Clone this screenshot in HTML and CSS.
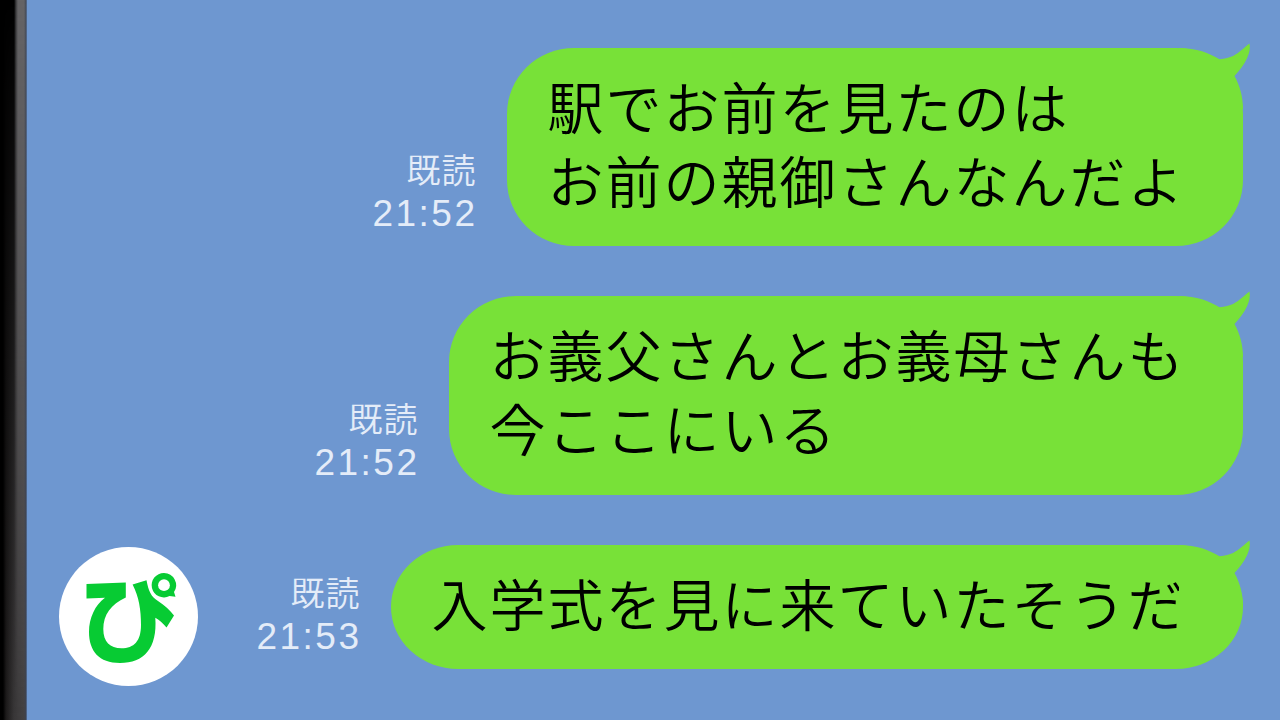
FILE: index.html
```
<!DOCTYPE html>
<html lang="ja">
<head>
<meta charset="utf-8">
<title>トーク</title>
<link rel="stylesheet" href="styles.css">
</head>
<body>
<div class="screen">
  <div class="bezel"><div class="bezel-shade"></div></div>
  <main class="chat">
    <div class="row">
      <div class="meta"><span class="read">既読</span><span class="time">21:52</span></div>
      <div class="bubble">
        <svg class="tail" viewBox="0 0 34 40"><path d="M-38 5 C-20 5 -8 10 2.500 16.300 C14 15.500 20 11 24 7.500 C27 5 30 2.500 32.500 .5 Q35 14 17.500 33 C23 43 26 54 26 66 H-38Z"/></svg>
        <span class="text">駅でお前を見たのは<br>お前の親御さんなんだよ</span>
      </div>
    </div>
    <div class="row">
      <div class="meta"><span class="read">既読</span><span class="time">21:52</span></div>
      <div class="bubble">
        <svg class="tail" viewBox="0 0 34 40"><path d="M-38 5 C-20 5 -8 10 2.500 16.300 C14 15.500 20 11 24 7.500 C27 5 30 2.500 32.500 .5 Q35 14 17.500 33 C23 43 26 54 26 66 H-38Z"/></svg>
        <span class="text">お義父さんとお義母さんも<br>今ここにいる</span>
      </div>
    </div>
    <div class="row row-last">
      <svg class="avatar" viewBox="59 547 139 139">
        <circle class="disc" cx="128.500" cy="616.500" r="69.500"/>
        <path class="mark" d="M86.500 584 L125.800 582.600 V597.500 C111 604 103.300 615 103.300 629 C103.300 642 110 648.300 121.500 648.300 C134 648.300 141 641 141 625 C141 610 139 597 132.600 584.500 L146.500 580.300 C148.500 591 151 597 158 601 C165 606 170 610 174 615.600 L166.500 627.500 C163 623 159 620 155.300 617.700 C157.500 648 144 663 120 663 C99 663 89 651 89 632 C89 618 95 605 105 597.700 L86.500 598.400Z"/>
        <circle class="halo" cx="164" cy="585.200" r="14.800"/>
        <path class="mark" d="M164 573 A12.200 12.200 0 1 0 169.500 596 L175.500 596.800 L174 592 A12.200 12.200 0 0 0 164 573Z"/>
        <circle class="disc" cx="164" cy="585.200" r="5.900"/>
      </svg>
      <div class="meta"><span class="read">既読</span><span class="time">21:53</span></div>
      <div class="bubble">
        <svg class="tail" viewBox="0 0 34 40"><path d="M-38 5 C-20 5 -8 10 2.500 16.300 C14 15.500 20 11 24 7.500 C27 5 30 2.500 32.500 .5 Q35 14 17.500 33 C23 43 26 54 26 66 H-38Z"/></svg>
        <span class="text">入学式を見に来ていたそうだ</span>
      </div>
    </div>
  </main>
</div>
</body>
</html>
```
FILE: styles.css
```
body {
  margin: 0;
  font-family: "Noto Sans CJK JP", sans-serif;
}
.screen {
  display: flex;
  width: 1280px;
  height: 720px;
  overflow: hidden;
  background: #6e97d0;
}
.bezel {
  flex: none;
  width: 27px;
  background: linear-gradient(90deg, #000 0 14px, #3d3d3f 16px, #656466 18px 24px, #444b59 26px, #5d7dab 27px);
}
.bezel-shade {
  height: 100%;
  background: linear-gradient(90deg, #000 0 3px, #1c1a1a 6px, #383637 14px, #434142 24px, #3c4250 26px, #5d7dab 27px);
  mask-image: linear-gradient(180deg, transparent 0, rgba(0, 0, 0, 0.5) 50%, #000 100%);
}
.chat {
  flex: 1;
  display: flex;
  flex-direction: column;
  gap: 50px;
  padding: 48px 37.5px 0 32px;
  box-sizing: border-box;
}
.row {
  display: flex;
  justify-content: flex-end;
  align-items: flex-end;
  gap: 30px;
}
.bubble {
  position: relative;
  box-sizing: border-box;
  padding: 20px 57px 30.3px 41px;
  border-radius: 67px / 66px;
  background: #78e138;
  color: #000;
  font-size: 56px;
  font-weight: 350;
  letter-spacing: 2px;
  line-height: 74px;
  white-space: nowrap;
}
.row-last .bubble {
  padding: 20.500px 57px 29.500px 41px;
  border-radius: 67px / 62px;
}
.tail {
  position: absolute;
  top: -5px;
  right: -8px;
  width: 34px;
  height: 40px;
  overflow: visible;
  fill: #78e138;
}
.meta {
  display: flex;
  flex-direction: column;
  align-items: flex-end;
  padding-bottom: 10px;
  color: #e4ecf8;
  line-height: 44px;
}
.read {
  font-size: 34px;
  font-weight: 350;
  letter-spacing: 1px;
  line-height: 45px;
  padding-bottom: 1px;
}
.time {
  font-family: "Liberation Sans", sans-serif;
  font-size: 37px;
  letter-spacing: 2.5px;
  margin-right: -1px;
}
.avatar {
  width: 139px;
  height: 139px;
  margin: 0 auto -17px 0;
}
.disc, .halo {
  fill: #fff;
}
.mark {
  fill: #07cb33;
}
```
